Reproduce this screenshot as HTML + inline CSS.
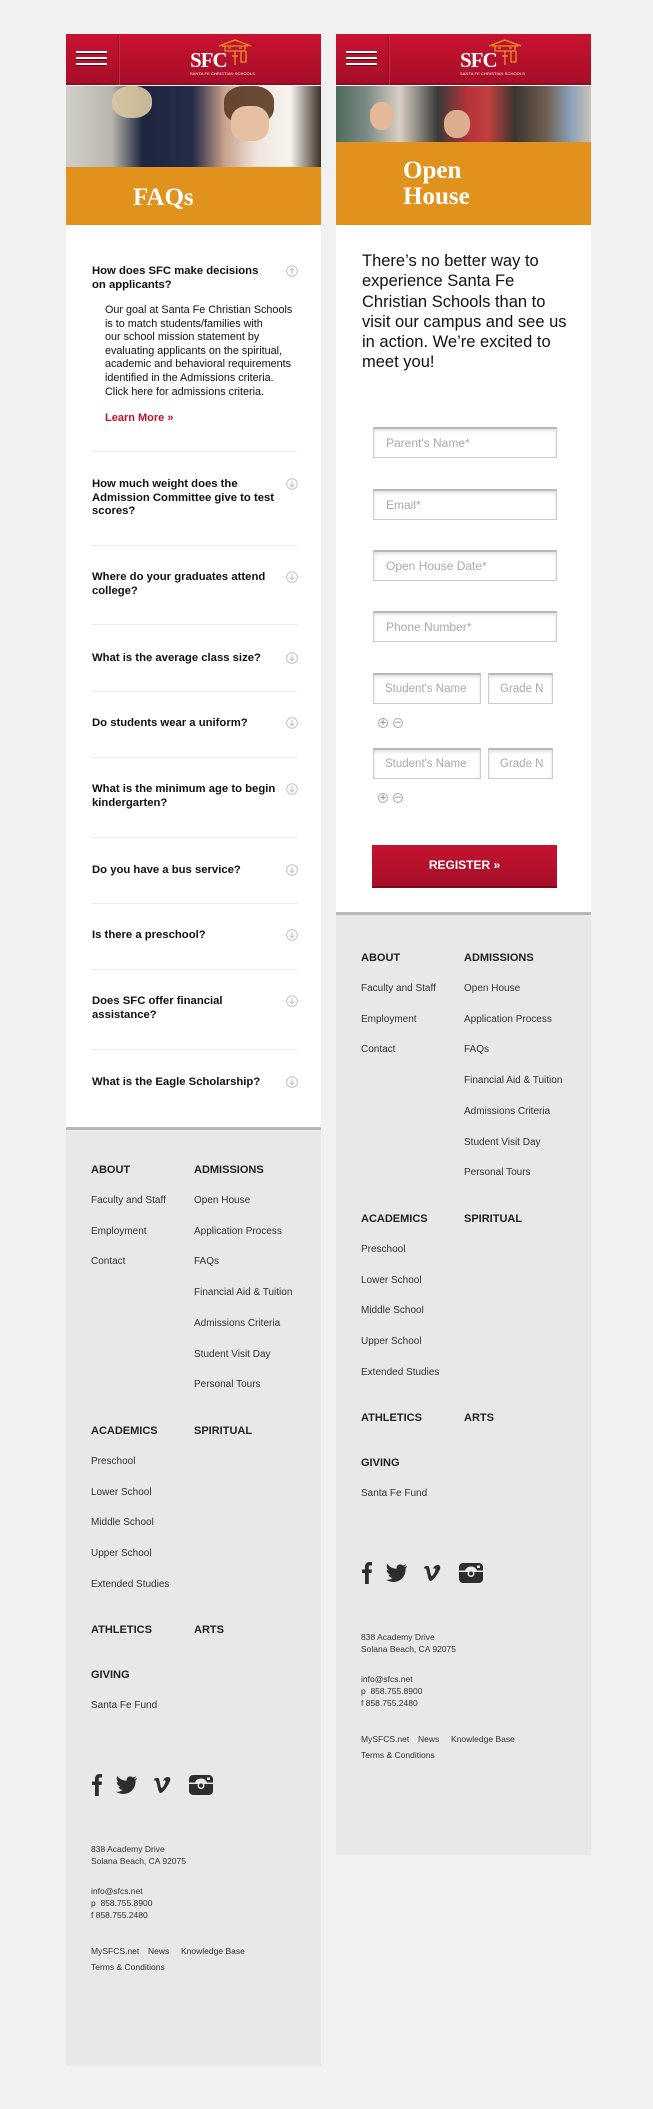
<!DOCTYPE html>
<html><head><meta charset="utf-8"><style>
*{margin:0;padding:0;box-sizing:border-box}
body{width:653px;height:2109px;background:#f1f1f1;position:relative;overflow:hidden;font-family:"Liberation Sans",sans-serif}
.a{position:absolute;white-space:nowrap}
.card{position:absolute;background:#fff;width:255px}
.hdr{position:absolute;left:0;top:0;width:255px;height:51px;background:linear-gradient(#c8132f,#a70e28);border-bottom:2px solid #8e0b20}
.hdr .div{position:absolute;left:52px;top:0;width:1px;height:51px;background:#8e0b20;box-shadow:1px 0 0 #d02a44}
.ham{position:absolute;left:10px;width:31px;height:2px;background:#fff;box-shadow:0 1px 0 #5a0010}
.sfc{position:absolute;left:124px;top:14px;font:bold 21px "Liberation Serif",serif;color:#fff;letter-spacing:-1px}
.tiny{position:absolute;left:124px;top:37px;font:4px "Liberation Sans",sans-serif;color:#fff;letter-spacing:.1px}
.orange{position:absolute;left:0;width:255px;background:#e0921c}
.h1{position:absolute;left:67px;font:bold 25px/26px "Liberation Serif",serif;color:#fff}
.q{position:absolute;left:26px;width:184px;font:bold 11.3px/13.7px "Liberation Sans",sans-serif;color:#111}
.sep{position:absolute;left:26px;width:206px;height:1px;background:#ececec}
.ic{position:absolute;left:220px;width:12px;height:12px}
.inp{position:absolute;background:#fff;border:1px solid #ccc;border-top:2px solid #b8b8b8;box-shadow:inset 0 2px 3px rgba(0,0,0,.12);height:31px;font:12px/28px "Liberation Sans",sans-serif;color:#aaa;padding-left:12px;overflow:hidden;white-space:nowrap}
.pm{position:absolute;width:10px;height:10px;border:1px solid #aaa;border-radius:50%;font:9px/8px "DejaVu Sans",sans-serif;color:#777;text-align:center}
.foot{position:absolute;width:255px;background:#e8e8e8;border-top:3px solid #b7b7b7}
.fh{position:absolute;font:bold 11px/14px "Liberation Sans",sans-serif;color:#222}
.fl{position:absolute;font:10px/14px "Liberation Sans",sans-serif;color:#333;white-space:nowrap}
.fs{position:absolute;font:8.5px/12px "Liberation Sans",sans-serif;color:#333;white-space:nowrap}
</style></head><body>

<svg width="0" height="0" style="position:absolute"><defs>
<symbol id="dn" viewBox="0 0 12 12"><circle cx="6" cy="6" r="5.3" fill="none" stroke="#c4c4c4" stroke-width="1"/><path d="M6 3 V8.5 M3.8 6.5 L6 8.7 L8.2 6.5" fill="none" stroke="#c4c4c4" stroke-width="1.1"/></symbol>
<symbol id="up" viewBox="0 0 12 12"><circle cx="6" cy="6" r="5.3" fill="none" stroke="#c4c4c4" stroke-width="1"/><path d="M6 9 V3.5 M3.8 5.5 L6 3.3 L8.2 5.5" fill="none" stroke="#c4c4c4" stroke-width="1.1"/></symbol>
</defs></svg>

<!-- LEFT CARD -->
<div class="card" style="left:66px;top:34px;height:1093px">
 <div class="hdr"><div class="div"></div>
  <div class="ham" style="top:17px"></div><div class="ham" style="top:23px"></div><div class="ham" style="top:29px"></div>
  <div class="sfc">SFC</div><div class="tiny">SANTA FE CHRISTIAN SCHOOLS</div>
  <svg class="a" style="left:151px;top:4px" width="36" height="28" viewBox="0 0 36 28" fill="none" stroke="#e8952a" stroke-width="1.3"><path d="M2 8 L18 2 L34 8 M5 8 H31 M8 8 V13 H28 V8 M11 10 h3 M22 10 h3 M18 13 V27 M15 18 H21 M24 13 V24 H29 V13"/></svg>
 </div>
 <div class="a" style="left:0;top:52px;width:255px;height:81px;background:linear-gradient(90deg,#cfcfc8 0,#b8b6ad 18%,#1e2540 30%,#262d48 50%,#c8a088 62%,#efe6de 75%,#f7f3ef 88%,#3a3025 100%)"></div>
 <div class="a" style="left:46px;top:52px;width:40px;height:32px;border-radius:45%;background:#dcc9a0;opacity:.9"></div>
 <div class="a" style="left:158px;top:52px;width:50px;height:38px;border-radius:40%;background:#5a3a22;opacity:.9"></div>
 <div class="a" style="left:165px;top:72px;width:38px;height:35px;border-radius:40%;background:#e7bfa3"></div>
 <div class="orange" style="top:133px;height:58px"><div class="h1" style="top:18px">FAQs</div></div>

 <div class="q" style="top:231px;width:180px">How does SFC make decisions on applicants?</div>
 <svg class="ic" style="top:231px"><use href="#up"/></svg>
 <div class="a" style="left:39px;top:270px;font:10.8px/13.6px 'Liberation Sans',sans-serif;color:#111">Our goal at Santa Fe Christian Schools<br>is to match students/families with<br>our school mission statement by<br>evaluating applicants on the spiritual,<br>academic and behavioral requirements<br>identified in the Admissions criteria.<br>Click here for admissions criteria.</div>
 <div class="a" style="left:39px;top:377px;font:bold 11px/14px 'Liberation Sans',sans-serif;color:#c0122f">Learn More »</div>

 <div class="sep" style="top:417px"></div>
 <div class="q" style="top:444px">How much weight does the Admission Committee give to test scores?</div><svg class="ic" style="top:444px"><use href="#dn"/></svg>
 <div class="sep" style="top:511px"></div>
 <div class="q" style="top:537px">Where do your graduates attend college?</div><svg class="ic" style="top:537px"><use href="#dn"/></svg>
 <div class="sep" style="top:590px"></div>
 <div class="q" style="top:618px">What is the average class size?</div><svg class="ic" style="top:618px"><use href="#dn"/></svg>
 <div class="sep" style="top:657px"></div>
 <div class="q" style="top:683px">Do students wear a uniform?</div><svg class="ic" style="top:683px"><use href="#dn"/></svg>
 <div class="sep" style="top:723px"></div>
 <div class="q" style="top:749px">What is the minimum age to begin kindergarten?</div><svg class="ic" style="top:749px"><use href="#dn"/></svg>
 <div class="sep" style="top:803px"></div>
 <div class="q" style="top:830px">Do you have a bus service?</div><svg class="ic" style="top:830px"><use href="#dn"/></svg>
 <div class="sep" style="top:869px"></div>
 <div class="q" style="top:895px">Is there a preschool?</div><svg class="ic" style="top:895px"><use href="#dn"/></svg>
 <div class="sep" style="top:935px"></div>
 <div class="q" style="top:961px">Does SFC offer financial assistance?</div><svg class="ic" style="top:961px"><use href="#dn"/></svg>
 <div class="sep" style="top:1015px"></div>
 <div class="q" style="top:1042px">What is the Eagle Scholarship?</div><svg class="ic" style="top:1042px"><use href="#dn"/></svg>
</div>

<!-- RIGHT CARD -->
<div class="card" style="left:336px;top:34px;height:881px">
 <div class="hdr"><div class="div"></div>
  <div class="ham" style="top:17px"></div><div class="ham" style="top:23px"></div><div class="ham" style="top:29px"></div>
  <div class="sfc">SFC</div><div class="tiny">SANTA FE CHRISTIAN SCHOOLS</div>
  <svg class="a" style="left:151px;top:4px" width="36" height="28" viewBox="0 0 36 28" fill="none" stroke="#e8952a" stroke-width="1.3"><path d="M2 8 L18 2 L34 8 M5 8 H31 M8 8 V13 H28 V8 M11 10 h3 M22 10 h3 M18 13 V27 M15 18 H21 M24 13 V24 H29 V13"/></svg>
 </div>
 <div class="a" style="left:0;top:52px;width:255px;height:56px;background:linear-gradient(90deg,#4f6a5a 0,#7b8a84 12%,#d9cfc4 25%,#3a3a38 40%,#b8343a 52%,#c04040 60%,#3b3530 70%,#6d5d4d 82%,#8aa0b8 92%,#c9c2b8 100%)"></div>
 <div class="a" style="left:34px;top:68px;width:24px;height:28px;border-radius:45%;background:#e4b99a"></div>
 <div class="a" style="left:108px;top:76px;width:26px;height:28px;border-radius:45%;background:#dcae90"></div>
 <div class="orange" style="top:108px;height:83px"><div class="h1" style="top:16px">Open<br>House</div></div>
 <div class="a" style="left:26px;top:217px;width:210px;white-space:normal;font:16.5px/20.3px 'Liberation Sans',sans-serif;color:#111">There’s no better way to experience Santa Fe Christian Schools than to visit our campus and see us in action. We’re excited to meet you!</div>

 <div class="inp" style="left:37px;top:393px;width:184px">Parent's Name*</div>
 <div class="inp" style="left:37px;top:455px;width:184px">Email*</div>
 <div class="inp" style="left:37px;top:516px;width:184px">Open House Date*</div>
 <div class="inp" style="left:37px;top:577px;width:184px">Phone Number*</div>
 <div class="inp" style="left:37px;top:639px;width:108px;font-size:11.5px;padding-left:11px">Student's Name</div>
 <div class="inp" style="left:152px;top:639px;width:65px;font-size:11.5px;padding-left:11px">Grade N</div>
 <div class="pm" style="left:42px;top:684px">+</div><div class="pm" style="left:57px;top:684px">−</div>
 <div class="inp" style="left:37px;top:714px;width:108px;font-size:11.5px;padding-left:11px">Student's Name</div>
 <div class="inp" style="left:152px;top:714px;width:65px;font-size:11.5px;padding-left:11px">Grade N</div>
 <div class="pm" style="left:42px;top:759px">+</div><div class="pm" style="left:57px;top:759px">−</div>
 <div class="a" style="left:36px;top:811px;width:185px;height:43px;background:linear-gradient(#c4132f,#a60f28);border-bottom:2px solid #7d0a1c;color:#fff;font:bold 12px/41px 'Liberation Sans',sans-serif;text-align:center">REGISTER »</div>
</div>

<!-- FOOTERS -->
<div class="foot" style="left:66px;top:1127px;height:939px"></div>
<div class="foot" style="left:336px;top:912px;height:943px"></div>

<script>
function footer(left,top){
 var F=top, h='';
 function add(c,x,y,t){h+='<div class="'+c+'" style="left:'+x+'px;top:'+(F+y-7)+'px">'+t+'</div>';}
 var L=left+25,R=left+128;
 add('fh',L,46,'ABOUT');add('fh',R,46,'ADMISSIONS');
 ['Faculty and Staff','Employment','Contact'].forEach(function(t,i){add('fl',L,77+i*30.7,t)});
 ['Open House','Application Process','FAQs','Financial Aid &amp; Tuition','Admissions Criteria','Student Visit Day','Personal Tours'].forEach(function(t,i){add('fl',R,77+i*30.7,t)});
 add('fh',L,307,'ACADEMICS');add('fh',R,307,'SPIRITUAL');
 ['Preschool','Lower School','Middle School','Upper School','Extended Studies'].forEach(function(t,i){add('fl',L,338+i*30.7,t)});
 add('fh',L,506,'ATHLETICS');add('fh',R,506,'ARTS');
 add('fh',L,551,'GIVING');add('fl',L,582,'Santa Fe Fund');
 var y=F+650;
 h+='<svg class="a" style="left:'+L+'px;top:'+y+'px" width="125" height="22" viewBox="0 0 125 22" fill="#2d2d2d">'+
 '<path d="M4 22 V11 H1 V7.5 H4 V5 C4 1.5 6 0 9 0 H11 V3.5 H9 C8 3.5 7.8 4 7.8 5 V7.5 H11 L10.5 11 H7.8 V22Z"/>'+
 '<path d="M46 4 C45 4.5 44 4.8 43 5 C44 4.3 44.7 3.4 45 2.3 C44 2.9 43 3.3 41.8 3.5 C39.5 1 35 2.8 35.6 6.8 C31.5 6.6 28.3 4.8 26.3 2 C25 4.3 25.8 7 27.8 8.4 C27 8.4 26.3 8.2 25.8 7.9 C25.8 10.3 27.4 12 29.5 12.5 C28.8 12.7 28 12.7 27.4 12.6 C28 14.5 29.7 15.8 31.7 15.9 C29.7 17.4 27.2 18.1 25 17.8 C34 23.5 45 17.5 44.6 6.5 C45.2 5.8 45.7 5 46 4Z"/>'+
 '<path d="M63 5 C65 4 67 3 68 5 C69 8 69.5 14 70.8 14 C72 14 75 8 74.5 7 C74 6 72.5 6.5 72 7 C73 2 81 1.5 79 7 C77 12 72 19 69.5 19 C67 19 66.5 10 65 7 C64.5 6 64 6.5 63.5 7Z"/>'+
 '<path d="M102 1 H118 C120 1 122 3 122 5 V17 C122 19 120 21 118 21 H102 C100 21 98 19 98 17 V5 C98 3 100 1 102 1Z M98 8.5 H104 A6.5 6.5 0 0 1 116 8.5 H122 V10 H98Z" fill-rule="evenodd"/>'+
 '<circle cx="110" cy="11.5" r="3.5" fill="#e8e8e8"/><circle cx="110" cy="11.5" r="2" fill="#2d2d2d"/><rect x="116" y="3.5" width="3" height="2.5" fill="#e8e8e8"/></svg>';
 add('fs',L,726,'838 Academy Drive');add('fs',L,738,'Solana Beach, CA 92075');
 add('fs',L,768,'info@sfcs.net');add('fs',L,780,'p&nbsp; 858.755.8900');add('fs',L,792,'f 858.755.2480');
 add('fs',L,828,'MySFCS.net');add('fs',L+57,828,'News');add('fs',L+90,828,'Knowledge Base');add('fs',L,844,'Terms &amp; Conditions');
 return h;
}
document.body.insertAdjacentHTML('beforeend',footer(336,912)+footer(66,1124));
</script>
</body></html>
